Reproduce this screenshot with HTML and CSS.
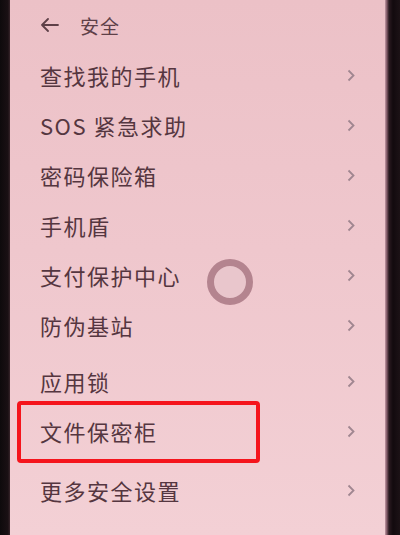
FILE: index.html
```html
<!DOCTYPE html>
<html lang="zh">
<head>
<meta charset="utf-8">
<link rel="stylesheet" href="styles.css">
</head>
<body>
<div class="frame">
  <div class="edge-left"></div>
  <div class="screen">
    <div class="header">
      <svg class="back" width="18" height="14" viewBox="0 0 18 14"><path d="M7 1 L1 7 L7 13 M1 7 H17" fill="none" stroke="#5e4048" stroke-width="1.8" stroke-linecap="round" stroke-linejoin="round"/></svg>
      <span class="title">安全</span>
    </div>
    <div class="group">
      <div class="row"><span class="label">查找我的手机</span><svg class="chev" width="8" height="13" viewBox="0 0 8 13"><path d="M1.5 1.5 L6.5 6.5 L1.5 11.5" fill="none" stroke="#a08690" stroke-width="1.8"/></svg></div>
      <div class="row"><span class="label">SOS 紧急求助</span><svg class="chev" width="8" height="13" viewBox="0 0 8 13"><path d="M1.5 1.5 L6.5 6.5 L1.5 11.5" fill="none" stroke="#a08690" stroke-width="1.8"/></svg></div>
      <div class="row"><span class="label">密码保险箱</span><svg class="chev" width="8" height="13" viewBox="0 0 8 13"><path d="M1.5 1.5 L6.5 6.5 L1.5 11.5" fill="none" stroke="#a08690" stroke-width="1.8"/></svg></div>
      <div class="row"><span class="label">手机盾</span><svg class="chev" width="8" height="13" viewBox="0 0 8 13"><path d="M1.5 1.5 L6.5 6.5 L1.5 11.5" fill="none" stroke="#a08690" stroke-width="1.8"/></svg></div>
      <div class="row touch-row"><span class="label">支付保护中心</span><span class="touch"></span><svg class="chev" width="8" height="13" viewBox="0 0 8 13"><path d="M1.5 1.5 L6.5 6.5 L1.5 11.5" fill="none" stroke="#a08690" stroke-width="1.8"/></svg></div>
      <div class="row"><span class="label">防伪基站</span><svg class="chev" width="8" height="13" viewBox="0 0 8 13"><path d="M1.5 1.5 L6.5 6.5 L1.5 11.5" fill="none" stroke="#a08690" stroke-width="1.8"/></svg></div>
    </div>
    <div class="group group-2">
      <div class="row"><span class="label">应用锁</span><svg class="chev" width="8" height="13" viewBox="0 0 8 13"><path d="M1.5 1.5 L6.5 6.5 L1.5 11.5" fill="none" stroke="#a08690" stroke-width="1.8"/></svg></div>
      <div class="row highlighted"><span class="label">文件保密柜</span><span class="mark"></span><svg class="chev" width="8" height="13" viewBox="0 0 8 13"><path d="M1.5 1.5 L6.5 6.5 L1.5 11.5" fill="none" stroke="#a08690" stroke-width="1.8"/></svg></div>
    </div>
    <div class="group group-3">
      <div class="row"><span class="label">更多安全设置</span><svg class="chev" width="8" height="13" viewBox="0 0 8 13"><path d="M1.5 1.5 L6.5 6.5 L1.5 11.5" fill="none" stroke="#a08690" stroke-width="1.8"/></svg></div>
    </div>
  </div>
  <div class="edge-right"></div>
</div>
</body>
</html>
```

FILE: styles.css
```css
html, body {
  margin: 0;
  padding: 0;
  width: 400px;
  height: 535px;
  overflow: hidden;
}
body {
  font-family: "Noto Sans CJK SC", "Noto Sans", sans-serif;
}
.frame {
  display: flex;
  width: 400px;
  height: 535px;
}
.edge-left {
  width: 10px;
  background: linear-gradient(to right, #0e0a0c 0, #1a1014 8px, #3a262c 10px);
}
.edge-right {
  width: 15px;
  background: linear-gradient(to right, #c49aa6 0, #7a5360 2px, #2a1a20 4px, #120a0e 8px, #1c1216 15px);
}
.screen {
  flex: 1;
  display: flex;
  flex-direction: column;
  background: linear-gradient(to bottom, #ecc1c7 0, #efc7cd 250px, #f3d0d5 535px);
  color: #5a3b44;
}
.header {
  height: 50px;
  display: flex;
  align-items: center;
  padding-left: 31px;
  gap: 21px;
}
.title {
  font-size: 19px;
  letter-spacing: 1px;
  color: #5e4048;
}
.group {
  display: flex;
  flex-direction: column;
}
.group-2 {
  margin-top: 6px;
}
.group-3 {
  margin-top: 9px;
}
.row {
  position: relative;
  height: 50px;
  display: flex;
  align-items: center;
  justify-content: space-between;
  padding: 0 30px 0 30px;
}
.label {
  font-size: 22px;
  letter-spacing: 1.5px;
  color: #553640;
}
.mark {
  position: absolute;
  left: 7px;
  top: -5px;
  width: 235px;
  height: 54px;
  border: 4px solid #f5141c;
  border-radius: 4px;
}
.touch {
  position: absolute;
  left: 197px;
  top: 9px;
  width: 32px;
  height: 32px;
  border: 7px solid #b4848f;
  border-radius: 50%;
  background: #e9c6cc;
}
```
